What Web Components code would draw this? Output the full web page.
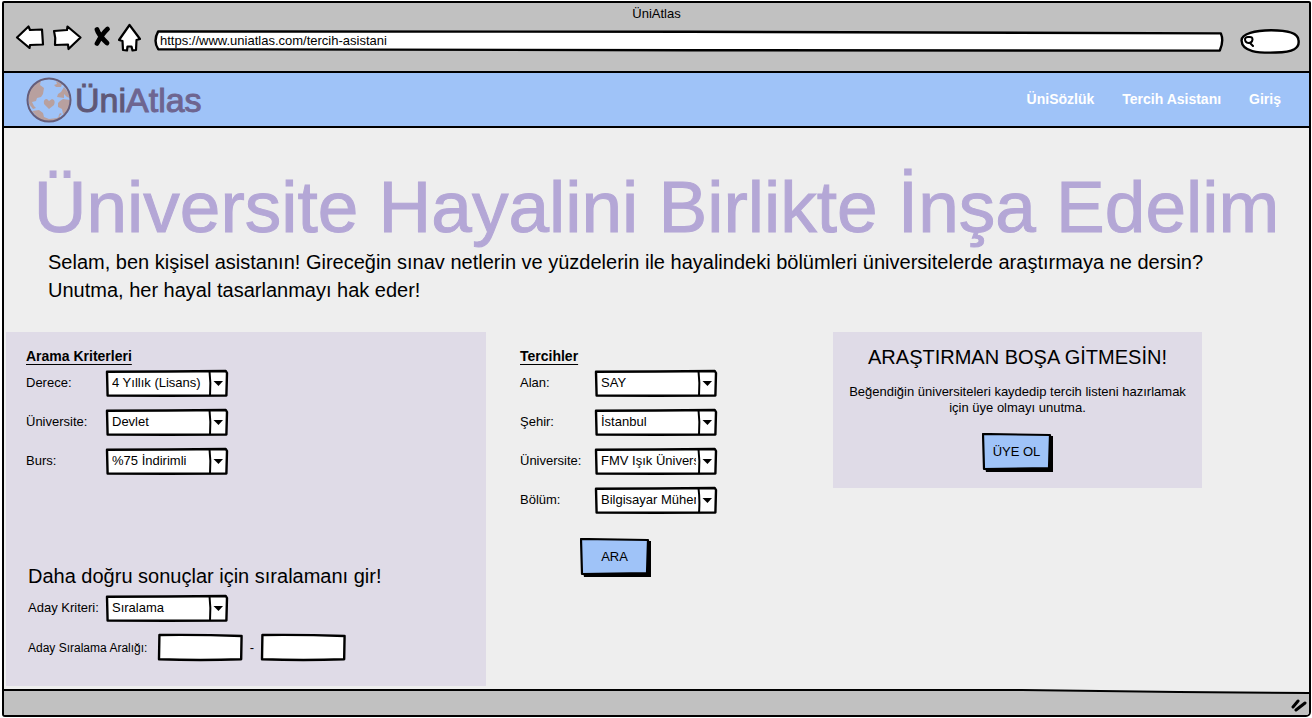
<!DOCTYPE html>
<html lang="tr">
<head>
<meta charset="utf-8">
<title>ÜniAtlas</title>
<style>
  body {
    margin: 0;
    background: #fff;
    color: #000;
    font-family: "Liberation Sans", Arial, sans-serif;
    font-size: 13px;
    line-height: 16px;
  }
</style>
</head>
<body>
<browser-window heading="ÜniAtlas" url="https://www.uniatlas.com/tercih-asistani">
  <site-header>
    <nav-link href="#sozluk">ÜniSözlük</nav-link>
    <nav-link href="#asistan">Tercih Asistanı</nav-link>
    <nav-link href="#giris">Giriş</nav-link>
  </site-header>
  <hero-banner>
    <span slot="title">Üniversite Hayalini Birlikte İnşa Edelim</span>
    Selam, ben kişisel asistanın! Gireceğin sınav netlerin ve yüzdelerin ile hayalindeki bölümleri üniversitelerde araştırmaya ne dersin?<br>Unutma, her hayal tasarlanmayı hak eder!
  </hero-banner>
  <assistant-columns>
    <criteria-panel slot="criteria"></criteria-panel>
    <field-group slot="choices" heading="Tercihler">
      <select-field label="Alan:" value="SAY"></select-field>
      <select-field label="Şehir:" value="İstanbul"></select-field>
      <select-field label="Üniversite:" value="FMV Işık Üniversitesi"></select-field>
      <select-field label="Bölüm:" value="Bilgisayar Mühendisliği"></select-field>
      <sketch-button slot="action">ARA</sketch-button>
    </field-group>
    <signup-card slot="signup"></signup-card>
  </assistant-columns>
</browser-window>

<script>
  const define = (name, html, setup) => {
    const template = document.createElement('template');
    template.innerHTML = html;
    customElements.define(name, class extends HTMLElement {
      constructor() {
        super();
        this.attachShadow({ mode: 'open' }).append(template.content.cloneNode(true));
      }
      connectedCallback() {
        if (setup) setup(this.shadowRoot, this);
      }
    });
  };

  /* Hand-drawn outlines, on a 100 x 100 grid that stretches with the box. */
  const outlines = {
    box: 'M0 3L50 2L99 0L100 8L99.5 98L50 99L0.5 98Z',
    field: 'M0.5 0Q50 -2 99.5 4L99 97Q50 103 0 97Z',
    bar: 'M0.3 2L50 4L99.8 12Q100.1 50 99.7 98L50 96L0.3 91Q-0.2 50 0.3 2Z',
    pill: 'M1 47C0 15 25 2 52 1C80 1 98 15 99 42C102 80 90 96 60 98C30 100 2 96 1 47Z'
  };
  define('sketch-outline', `
    <style>
      :host { position: absolute; inset: 1px; pointer-events: none; }
      svg { display: block; width: 100%; height: 100%; overflow: visible; }
      path { fill: var(--fill, #fff); stroke: #000; stroke-width: 2.400; stroke-linejoin: round; vector-effect: non-scaling-stroke; }
    </style>
    <svg viewBox="0 0 100 100" preserveAspectRatio="none" aria-hidden="true"><path/></svg>`,
    (root, el) => root.querySelector('path').setAttribute('d', outlines[el.getAttribute('shape') || 'box']));

  define('browser-window', `
    <style>
      :host { display: flex; flex-direction: column; box-sizing: border-box; min-height: 100vh; padding: 1px 1px 1px 2px; }
      .frame { flex: 1; display: flex; flex-direction: column; border: 2px solid #000; border-radius: 2px 2px 5px 3px; background: #eee; overflow: hidden; }
      .chrome { height: 68px; background: #c1c1c1; border-bottom: 2px solid #000; }
      .title { text-align: center; padding-top: 3px; font-size: 13px; }
      .tools { display: flex; align-items: flex-start; gap: 16px; padding: 0 9px 0 11px; }
      .icons { display: flex; width: 123px; }
      .icons button { border: 0; padding: 0; background: none; display: block; height: 30px; }
      svg { display: block; }
      .address, .search { position: relative; height: 22px; }
      .address { flex: 1; margin-top: 8px; }
      .search { width: 60px; height: 25px; margin-top: 7px; }
      input { position: relative; box-sizing: border-box; width: 100%; height: 20px; border: 0; outline: 0; background: none; font: inherit; color: inherit; padding: 0 6px; display: block; }
      .search input { height: 24px; padding-left: 18px; }
      .search svg { position: absolute; left: 3px; top: 6px; }
      main { flex: 1; }
      footer { height: 27px; position: relative; }
      footer svg.bar { position: absolute; inset: 0; width: 100%; height: 100%; overflow: visible; }
      footer svg.grip { position: absolute; right: 2px; bottom: 3px; }
    </style>
    <div class="frame">
      <div class="chrome">
        <div class="title"></div>
        <div class="tools">
          <div class="icons">
            <button aria-label="Geri"><svg width="36" height="30" viewBox="0 0 36 30"><path d="M2 15.500L13.500 4.500L15 8L27 7.500L28 22.500L15 23L14.500 26Z" fill="#fff" stroke="#000" stroke-width="2.200" stroke-linejoin="round"/></svg></button>
            <button aria-label="İleri"><svg width="38" height="30" viewBox="0 0 38 30"><path d="M3 9L16 8L16.500 4.500L29.500 15.500L17.500 27L17 22.500L4 23Q5 16 3 9Z" fill="#fff" stroke="#000" stroke-width="2.200" stroke-linejoin="round"/></svg></button>
            <button aria-label="Durdur"><svg width="27" height="30" viewBox="0 0 27 30"><path d="M8 7.500Q9.500 13 18 21M18.500 7Q13 12 8 21.500" fill="none" stroke="#000" stroke-width="4.800" stroke-linecap="round"/></svg></button>
            <button aria-label="Ana sayfa"><svg width="26" height="30" viewBox="0 0 26 30"><path d="M13.500 3L24 17L20.500 18L20 28L16.500 28.500L15.500 24.500L11.500 24.500L11 28.500L7 28L6.500 19L3 18Z" fill="#fff" stroke="#000" stroke-width="2.200" stroke-linejoin="round"/></svg></button>
          </div>
          <div class="address"><sketch-outline shape="bar"></sketch-outline><input id="url" type="text" aria-label="Adres"></div>
          <div class="search"><sketch-outline shape="pill"></sketch-outline><svg width="12" height="12" viewBox="0 0 12 12"><path d="M2 4Q2.500 1.500 6 2Q9.500 1.500 9.500 4.500Q9 8 5.500 8Q2 7.500 2 4ZM7 8L10 11" fill="none" stroke="#000" stroke-width="2" stroke-linejoin="round" stroke-linecap="round"/></svg><input type="text" aria-label="Ara"></div>
        </div>
      </div>
      <main><slot></slot></main>
      <footer>
        <svg class="bar" viewBox="0 0 1000 27" preserveAspectRatio="none" aria-hidden="true"><path d="M-1 2L780 2L900 4L1001 5V29H-1Z" fill="#c1c1c1" stroke="#000" stroke-width="2" vector-effect="non-scaling-stroke"/></svg>
        <svg class="grip" width="16" height="14" viewBox="0 0 16 14" aria-hidden="true"><path d="M2 9L7 3M5 12L14 5" stroke="#000" stroke-width="3" stroke-linecap="round"/></svg>
      </footer>
    </div>`,
    (root, el) => {
      root.querySelector('.title').textContent = el.getAttribute('heading');
      root.querySelector('#url').value = el.getAttribute('url');
    });

  define('uni-logo', `
    <style>
      :host { display: flex; align-items: center; gap: 3px; font-size: 34px; line-height: 40px; color: #6e6590; }
      span { -webkit-text-stroke: 1px currentColor; }
      b { font-weight: 400; color: #5f5877; }
      svg { display: block; }
    </style>
    <svg width="46" height="46" viewBox="0 0 46 46" aria-hidden="true">
      <g fill="#b8a09f">
        <path d="M15 3L14 8L18 11L17 17L15 20L11 21L10 24L6 25L8 29L10 31L7 32L3 27L2 20L4 12L9 6Z"/>
        <path d="M6 34L13 33L17 36L18 40L23 42L31 41L34 39L34 42L26 44L18 44L12 41Z"/>
        <path d="M30 4L36 7L35 10L30 10L28 8L31 7Z"/>
        <path d="M38 10L42 15L44 21L41 20L38 17L38 21L31 20L32 17L35 15Z"/>
        <path d="M34 24L37 22L44 23L44 29L41 36L37 37L36 32L32 30L32 26Z"/>
        <path d="M36 37L32 40L34 36Z"/>
        <path d="M23 32L18 27Q17 22 21 22L23 24L26 22Q30 23 28 28Z"/>
      </g>
      <circle cx="23" cy="23" r="21.500" fill="none" stroke="#655d7a" stroke-width="2"/>
    </svg>
    <span><b>Üni</b>Atlas</span>`);

  define('site-header', `
    <style>
      :host { display: flex; align-items: center; justify-content: space-between; height: 53px; padding: 0 28px 0 22px; background: #9fc3f8; border-bottom: 2px solid #000; }
      nav { display: flex; gap: 28px; }
    </style>
    <uni-logo></uni-logo><nav><slot></slot></nav>`);

  define('nav-link', `
    <style>
      :host { display: block; }
      a { color: #fff; font-size: 14px; font-weight: 700; text-decoration: none; }
    </style>
    <a><slot></slot></a>`,
    (root, el) => root.querySelector('a').href = el.getAttribute('href'));

  define('hero-banner', `
    <style>
      :host { display: block; padding: 38px 20px 28px; }
      h1 { margin: 0; font-size: 73px; line-height: 82px; font-weight: 400; color: #b4a7d6; text-align: center; -webkit-text-stroke: 1px currentColor; }
      p { margin: 0; padding: 0 24px; font-size: 20px; line-height: 28px; }
    </style>
    <h1><slot name="title"></slot></h1>
    <p><slot></slot></p>`);

  define('assistant-columns', `
    <style>
      :host { display: grid; grid-template-columns: 480fr 279fr 369fr; gap: 34px; align-items: start; padding: 0 107px 2px 2px; }
    </style>
    <slot name="criteria"></slot><slot name="choices"></slot><slot name="signup"></slot>`);

  define('field-group', `
    <style>
      :host { display: block; padding-top: 16px; }
      h2 { margin: 0 0 6px; font-size: 14px; line-height: 16px; font-weight: 700; text-decoration: underline; text-underline-offset: 3px; }
      .rows { display: grid; gap: 12px; }
      ::slotted([slot="action"]) { margin: 24px 0 0 60px; }
    </style>
    <h2></h2><div class="rows"><slot></slot></div><slot name="action"></slot>`,
    (root, el) => root.querySelector('h2').textContent = el.getAttribute('heading'));

  define('select-field', `
    <style>
      :host { display: flex; align-items: center; height: 27px; --label: 75px; }
      :host([wide]) { --label: 80px; }
      label { width: var(--label); padding-bottom: 2px; box-sizing: border-box; white-space: nowrap; }
      .box { position: relative; width: 122px; height: 27px; }
      select { position: relative; display: block; width: 122px; height: 25px; appearance: none; border: 0; outline: 0; background: none; padding: 0 21px 0 6px; font: inherit; color: inherit; text-overflow: clip; white-space: nowrap; overflow: hidden; }
      svg { position: absolute; right: 0; top: 0; pointer-events: none; }
    </style>
    <label for="s"></label>
    <div class="box"><sketch-outline></sketch-outline><select id="s"><option></option></select>
      <svg width="20" height="27" viewBox="0 0 20 27" aria-hidden="true"><path d="M1.500 1Q3 13 2 26" fill="none" stroke="#000" stroke-width="2"/><path d="M5.500 11L15 11L10.500 16Z"/></svg>
    </div>`,
    (root, el) => {
      root.querySelector('label').textContent = el.getAttribute('label');
      root.querySelector('option').textContent = el.getAttribute('value');
    });

  define('sketch-button', `
    <style>
      :host { display: inline-block; vertical-align: top; }
      button { position: relative; display: block; min-width: 71px; height: 39px; border: 0; background: none; padding: 0 6px 2px 4px; font: inherit; color: inherit; }
      svg { position: absolute; inset: 0; width: 100%; height: 100%; }
      span { position: relative; }
    </style>
    <button type="button">
      <svg viewBox="0 0 71 39" preserveAspectRatio="none" aria-hidden="true"><path d="M3 34L66 34L67 3L71 3L71 39L4 39Z"/><path d="M1 1L68 2L67 35L2 36Z" fill="#9fc3f8" stroke="#000" stroke-width="2.200" stroke-linejoin="round"/></svg>
      <span><slot></slot></span>
    </button>`);

  define('criteria-panel', `
    <style>
      :host { display: block; background: #dfdbe7; padding: 0 20px 25px; }
      h3 { margin: 87px 0 5px 2px; font-size: 20px; line-height: 28px; font-weight: 400; }
      select-field.rank { padding-left: 2px; --label: 78px; }
      .range { display: flex; align-items: center; gap: 6px; padding: 12px 0 0 2px; }
      .range label { white-space: nowrap; width: 124px; font-size: 12px; }
      .range span { width: 6px; text-align: center; }
      .input { position: relative; width: 85px; height: 27px; }
      input { position: relative; box-sizing: border-box; width: 100%; height: 27px; border: 0; outline: 0; background: none; font: inherit; padding: 0 6px; }
    </style>
    <field-group heading="Arama Kriterleri">
      <select-field wide label="Derece:" value="4 Yıllık (Lisans)"></select-field>
      <select-field wide label="Üniversite:" value="Devlet"></select-field>
      <select-field wide label="Burs:" value="%75 İndirimli"></select-field>
    </field-group>
    <h3>Daha doğru sonuçlar için sıralamanı gir!</h3>
    <select-field class="rank" label="Aday Kriteri:" value="Sıralama"></select-field>
    <div class="range">
      <label for="from">Aday Sıralama Aralığı:</label>
      <div class="input"><sketch-outline shape="field"></sketch-outline><input id="from" type="text"></div>
      <span>-</span>
      <div class="input"><sketch-outline shape="field"></sketch-outline><input type="text" aria-label="Aday sıralama üst sınırı"></div>
    </div>`);

  define('signup-card', `
    <style>
      :host { display: block; background: #dfdbe7; padding: 11px 10px 16px; text-align: center; }
      h2 { margin: 0 0 13px; font-size: 20px; line-height: 28px; font-weight: 400; }
      p { margin: 0 0 17px; }
    </style>
    <h2>ARAŞTIRMAN BOŞA GİTMESİN!</h2>
    <p>Beğendiğin üniversiteleri kaydedip tercih listeni hazırlamak için üye olmayı unutma.</p>
    <sketch-button>ÜYE OL</sketch-button>`);
</script>
</body>
</html>
